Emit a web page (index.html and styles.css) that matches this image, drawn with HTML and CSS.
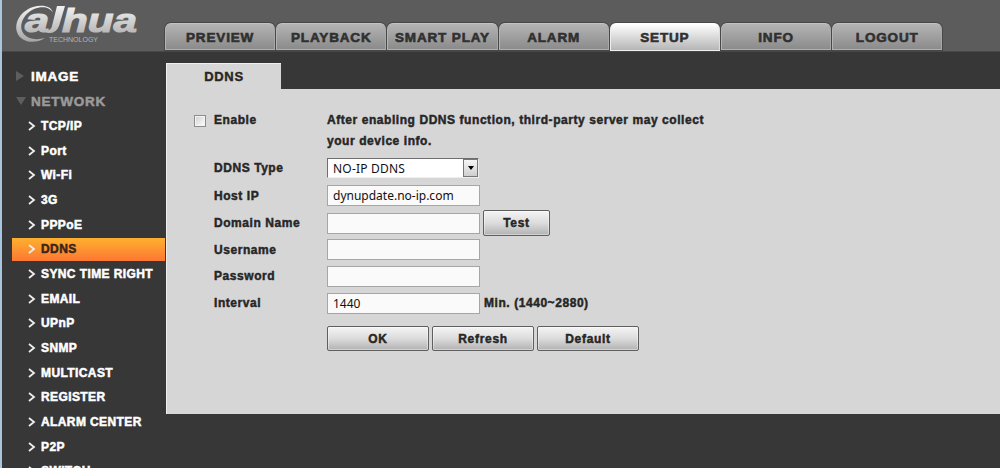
FILE: index.html
```html
<!DOCTYPE html>
<html lang="en">
<head>
  <meta charset="UTF-8">
  <title>DDNS</title>
  <link rel="stylesheet" href="styles.css">
</head>
<body>
  <header class="header">
    <svg class="logo" width="159" height="50" viewBox="0 0 159 50">
      <defs>
        <linearGradient id="silver" gradientUnits="userSpaceOnUse" x1="0" y1="5" x2="0" y2="43">
          <stop offset="0" stop-color="#f4f4f4"/>
          <stop offset="1" stop-color="#a2a2a2"/>
        </linearGradient>
      </defs>
      <path d="M53 13 C52 6 42 4 33 7 C21 11 14 22 17 32 C20 42 34 45 45 38 C34 41 25 38 22 31 C19 23 25 13 34 9 C42 6 50 7 53 13 Z" fill="url(#silver)"/>
      <path d="M57 6 H65 L59 26 Q56 34 47 33 L48 30 Q51 30 52 26 Z" fill="url(#silver)"/>
      <text class="logo-text" x="25" y="32" textLength="24" lengthAdjust="spacingAndGlyphs">a</text>
      <text class="logo-text" x="62" y="32" textLength="75" lengthAdjust="spacingAndGlyphs">hua</text>
      <text class="logo-sub" x="49" y="42" textLength="49" lengthAdjust="spacingAndGlyphs">TECHNOLOGY</text>
    </svg>
    <nav class="tabs">
      <a class="tab">PREVIEW</a>
      <a class="tab">PLAYBACK</a>
      <a class="tab">SMART PLAY</a>
      <a class="tab">ALARM</a>
      <a class="tab active">SETUP</a>
      <a class="tab">INFO</a>
      <a class="tab">LOGOUT</a>
    </nav>
  </header>
  <div class="main">
    <ul class="menu">
      <li class="group"><span class="arrow-right"></span>IMAGE</li>
      <li class="group open"><span class="arrow-down"></span>NETWORK</li>
      <li class="item"><svg class="chev" viewBox="0 0 8 10"><path d="M1 1L6 5L1 9"/></svg>TCP/IP</li>
      <li class="item"><svg class="chev" viewBox="0 0 8 10"><path d="M1 1L6 5L1 9"/></svg>Port</li>
      <li class="item"><svg class="chev" viewBox="0 0 8 10"><path d="M1 1L6 5L1 9"/></svg>Wi-Fi</li>
      <li class="item"><svg class="chev" viewBox="0 0 8 10"><path d="M1 1L6 5L1 9"/></svg>3G</li>
      <li class="item"><svg class="chev" viewBox="0 0 8 10"><path d="M1 1L6 5L1 9"/></svg>PPPoE</li>
      <li class="item selected"><svg class="chev" viewBox="0 0 8 10"><path d="M1 1L6 5L1 9"/></svg>DDNS</li>
      <li class="item"><svg class="chev" viewBox="0 0 8 10"><path d="M1 1L6 5L1 9"/></svg>SYNC TIME RIGHT</li>
      <li class="item"><svg class="chev" viewBox="0 0 8 10"><path d="M1 1L6 5L1 9"/></svg>EMAIL</li>
      <li class="item"><svg class="chev" viewBox="0 0 8 10"><path d="M1 1L6 5L1 9"/></svg>UPnP</li>
      <li class="item"><svg class="chev" viewBox="0 0 8 10"><path d="M1 1L6 5L1 9"/></svg>SNMP</li>
      <li class="item"><svg class="chev" viewBox="0 0 8 10"><path d="M1 1L6 5L1 9"/></svg>MULTICAST</li>
      <li class="item"><svg class="chev" viewBox="0 0 8 10"><path d="M1 1L6 5L1 9"/></svg>REGISTER</li>
      <li class="item"><svg class="chev" viewBox="0 0 8 10"><path d="M1 1L6 5L1 9"/></svg>ALARM CENTER</li>
      <li class="item"><svg class="chev" viewBox="0 0 8 10"><path d="M1 1L6 5L1 9"/></svg>P2P</li>
      <li class="item"><svg class="chev" viewBox="0 0 8 10"><path d="M1 1L6 5L1 9"/></svg>SWITCH</li>
    </ul>
    <div class="content">
      <div class="page-tab">DDNS</div>
      <div class="panel">
        <div class="row row-enable">
          <label class="label"><span class="checkbox"></span>Enable</label>
          <p class="note">After enabling DDNS function, third-party server may collect<br>your device info.</p>
        </div>
        <div class="row row-type">
          <span class="label">DDNS Type</span>
          <div class="select"><span>NO-IP DDNS</span><span class="select-btn"><svg width="6" height="4" viewBox="0 0 6 4"><path d="M0 0H6L3 4Z"/></svg></span></div>
        </div>
        <div class="row row-host">
          <span class="label">Host IP</span>
          <div class="field">dynupdate.no-ip.com</div>
        </div>
        <div class="row">
          <span class="label">Domain Name</span>
          <div class="field"></div>
          <button class="btn btn-test">Test</button>
        </div>
        <div class="row">
          <span class="label">Username</span>
          <div class="field"></div>
        </div>
        <div class="row">
          <span class="label">Password</span>
          <div class="field"></div>
        </div>
        <div class="row">
          <span class="label">Interval</span>
          <div class="field">1440</div>
          <span class="unit">Min. (1440~2880)</span>
        </div>
        <div class="actions">
          <button class="btn">OK</button>
          <button class="btn">Refresh</button>
          <button class="btn">Default</button>
        </div>
      </div>
    </div>
  </div>
</body>
</html>
```
FILE: styles.css
```css
* {
  margin: 0;
  padding: 0;
  box-sizing: border-box;
}
body {
  height: 468px;
  overflow: hidden;
  background: #373737;
  border-left: 2px solid #a9c6df;
  font-family: "Liberation Sans", Arial, sans-serif;
  font-weight: bold;
  font-size: 12px;
  color: #262626;
}
.header {
  display: flex;
  align-items: flex-end;
  height: 52px;
  background: #5c5c5c;
  border-bottom: 1px solid #474747;
}
.logo {
  align-self: flex-start;
  margin-left: -2px;
  width: 159px;
  flex: none;
}
.logo-text {
  font-size: 34px;
  font-style: italic;
  fill: url(#silver);
  stroke: url(#silver);
  stroke-width: 1.2px;
}
.logo-sub {
  font-size: 7px;
  font-weight: normal;
  fill: #b4b4b4;
}
.tabs {
  display: flex;
  gap: 1px;
  margin-left: 6px;
}
.tab {
  width: 110.2px;
  height: 27px;
  line-height: 27px;
  border-radius: 6px 6px 0 0;
  border: 1px solid #bbb;
  border-color: #c4c4c4 #a8a8a8 #b0b0b0 #b4b4b4;
  background: linear-gradient(#b4b4b4, #8b8b8b);
  box-shadow: 0 0 0 1px #484848;
  text-align: center;
  font-size: 13.5px;
  letter-spacing: 0.85px;
  color: #303030;
  -webkit-text-stroke: 0.6px;
}
.tab.active {
  height: 28px;
  line-height: 28px;
  border-color: #fff #ddd #eee #eee;
  background: linear-gradient(#fff, #b6b6b6);
}
.main {
  display: flex;
  height: 416px;
}
.menu {
  width: 164px;
  flex: none;
  padding: 11.5px 1px 0 10px;
  list-style: none;
  color: #fff;
}
.group {
  display: flex;
  align-items: center;
  height: 25px;
  padding-left: 4px;
  font-size: 13.5px;
  letter-spacing: 0.75px;
  -webkit-text-stroke: 0.5px;
}
.group.open {
  color: #9a9a9a;
}
.arrow-right {
  margin-right: 7px;
  border-left: 8px solid #5e5e5e;
  border-top: 5px solid transparent;
  border-bottom: 5px solid transparent;
}
.arrow-down {
  margin-right: 5px;
  border-top: 8px solid #5e5e5e;
  border-left: 5px solid transparent;
  border-right: 5px solid transparent;
}
.item {
  display: flex;
  align-items: center;
  height: 24.7px;
  padding-left: 16px;
  letter-spacing: 0.4px;
  -webkit-text-stroke: 0.5px;
}
.item.selected {
  height: 23px;
  margin: 0.7px 0 1px;
  background: linear-gradient(#fdb02f, #fd7833);
  color: #3a2418;
}
.chev {
  width: 8px;
  height: 10px;
  margin-right: 5px;
  fill: none;
  stroke: #eee;
  stroke-width: 1.8;
}
.content {
  flex: 1;
  padding-top: 11px;
}
.page-tab {
  width: 115px;
  height: 26px;
  line-height: 25px;
  background: #d6d6d6;
  border-top: 1px solid #f0f0f0;
  border-left: 1px solid #f0f0f0;
  text-align: center;
  font-size: 13px;
  letter-spacing: 0.7px;
  -webkit-text-stroke: 0.4px;
}
.panel {
  height: 325px;
  padding: 21px 0 0 27px;
  background: #d6d6d6;
  border-left: 1px solid #eee;
  letter-spacing: 0.56px;
  -webkit-text-stroke: 0.45px;
}
.row {
  display: flex;
  align-items: center;
  height: 26.6px;
}
.label {
  width: 133px;
  padding-left: 20px;
}
.row-enable {
  align-items: flex-start;
  height: 44.5px;
  line-height: 21px;
}
.row-enable .label {
  display: flex;
  align-items: center;
  padding-left: 0;
}
.checkbox {
  width: 12px;
  height: 12px;
  margin-right: 8px;
  border: 1px solid #8c8c8c;
  background: linear-gradient(135deg, #cfcfcf, #fff);
  box-shadow: inset 0 0 0 1px #f4f4f4;
}
.row-type {
  height: 27px;
}
.row-host {
  height: 28.5px;
}
.select,
.field {
  width: 153px;
  height: 21px;
  padding-left: 5px;
  line-height: 20px;
  border: 1px solid #a6a6a6;
  background: #fafafa;
  font-family: "Noto Sans", sans-serif;
  font-weight: normal;
  font-size: 12px;
  letter-spacing: 0;
  color: #111;
  -webkit-text-stroke: 0;
}
.select {
  display: flex;
  justify-content: space-between;
  width: 152px;
  height: 20px;
  border-color: #6e6e6e #eee #eee #6e6e6e;
  background: #fff;
  letter-spacing: 0.2px;
}
.select-btn {
  display: flex;
  align-items: center;
  justify-content: center;
  width: 15px;
  height: 18px;
  border: 1px solid #777;
  background: linear-gradient(#f6f6f6, #cfcfcf);
}
.unit {
  margin-left: 4px;
}
.btn {
  width: 102px;
  height: 25px;
  border: 1px solid #5f5f5f;
  border-radius: 2px;
  background: linear-gradient(#f4f4f4, #dcdcdc 50%, #b2b2b2);
  box-shadow: inset 0 0 0 1px rgba(255, 255, 255, 0.4);
  font: inherit;
  font-size: 12px;
  color: #262626;
  letter-spacing: 0.7px;
  -webkit-text-stroke: 0.45px;
}
.btn-test {
  width: 67px;
  height: 26px;
  margin-left: 3px;
}
.actions {
  display: flex;
  gap: 3px;
  margin: 10px 0 0 133px;
}
```
